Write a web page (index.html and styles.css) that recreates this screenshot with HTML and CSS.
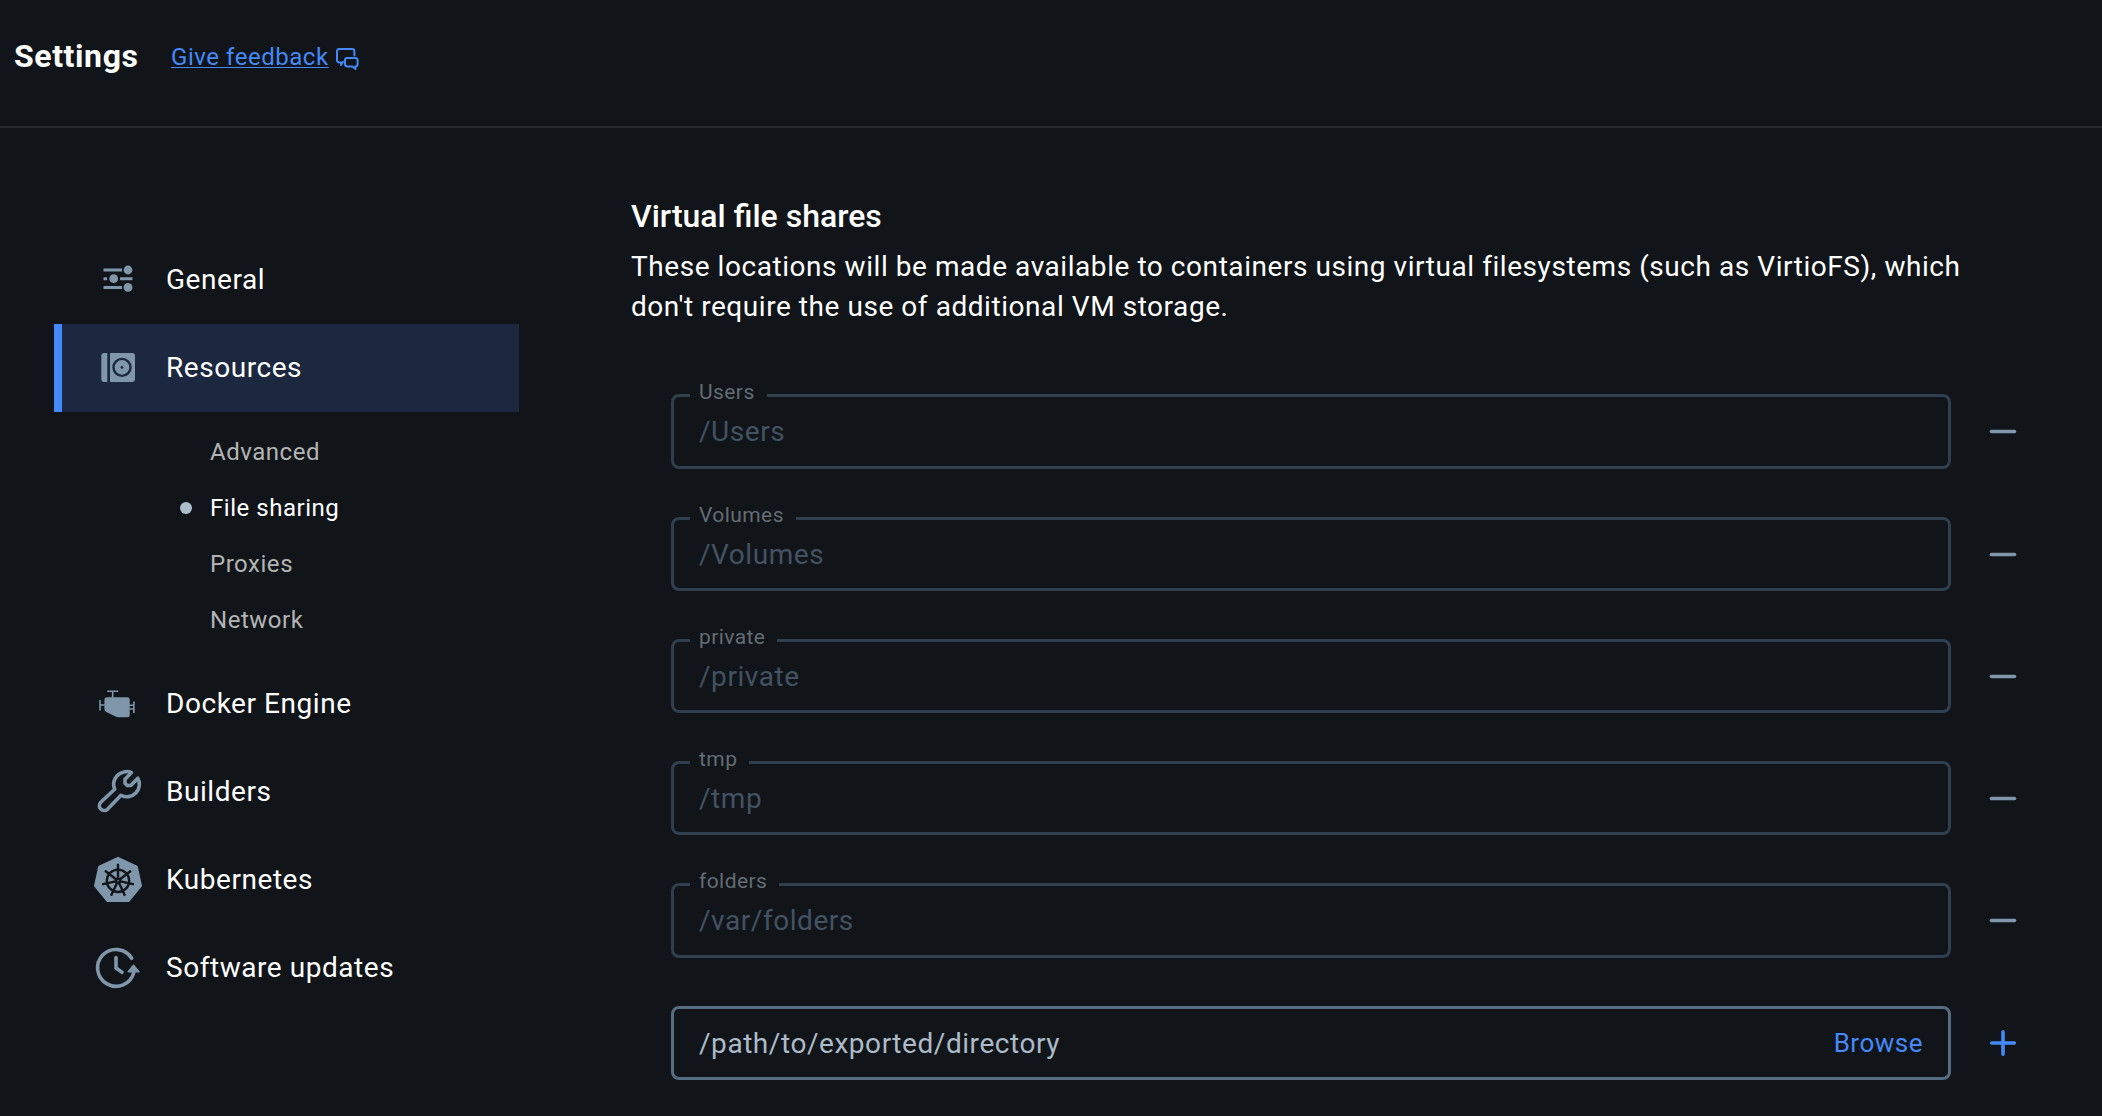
FILE: index.html
```html
<!DOCTYPE html>
<html lang="en">
<head>
<meta charset="utf-8">
<title>Settings</title>
<link rel="stylesheet" href="styles.css">
</head>
<body>
<header class="topbar">
  <h1 class="title">Settings</h1>
  <a class="feedback" href="#"><span class="feedback-text">Give feedback</span>
    <svg class="feedback-icon" viewBox="0 0 24 24" fill="none" stroke="currentColor" stroke-width="2" stroke-linejoin="round" stroke-linecap="round"><path d="M8 14.8 6 18v-2.6H4.400Q2 15.400 2 13V4.400Q2 2 4.400 2H17Q19.400 2 19.400 4.400V8.500"/><path d="M12.400 11H20Q22.600 11 22.600 13.400V17Q22.600 19.400 20.400 19.400V22L17.600 19.400H12.400Q10 19.400 10 17V13.400Q10 11 12.400 11Z"/></svg>
  </a>
</header>
<div class="layout">
  <nav class="sidebar">
    <a class="item raised"><svg class="icon" viewBox="0 0 48 48"><g stroke="currentColor" stroke-width="3"><path d="M9.500 14H28M9.500 22.700H13M26 22.700h12.500M9.500 31.400H28"/></g><g fill="currentColor"><circle cx="34" cy="14" r="4.400"/><circle cx="19.700" cy="22.700" r="4.400"/><circle cx="34" cy="31.400" r="4.400"/></g></svg><span>General</span></a>
    <a class="item raised active"><svg class="icon" viewBox="0 0.6 48 48"><path fill="currentColor" d="M10.300 9.500H13.300V38.500H10.300Q7.300 38.500 7.300 35.500V12.500Q7.300 9.500 10.300 9.500ZM16 9.500H38Q41 9.500 41 12.500V35.500Q41 38.500 38 38.500H16Z"/><circle class="ring" cx="28" cy="24" r="8.500"/><circle class="hub" cx="28" cy="24" r="1.400"/></svg><span>Resources</span></a>
    <div class="subnav">
      <a class="sub">Advanced</a>
      <a class="sub current">File sharing</a>
      <a class="sub">Proxies</a>
      <a class="sub">Network</a>
    </div>
    <a class="item"><svg class="icon" viewBox="2.3 0 48 48"><path fill="currentColor" d="M15 18.300H35.500Q38 18.300 38 20.800V36Q38 38.300 35.500 38.300H27Q25 38.300 23.300 37.300L14.500 33Q12.700 32 12.700 30V20.800Q12.700 18.300 15 18.300Z"/><path d="M15.500 12.300H26.500M21 12.300V19M8.300 21V31.500M8.300 26H13M42.200 22.500V34M37 26.300H42M37 30H42" fill="none" stroke="currentColor" stroke-width="1.600"/></svg><span>Docker Engine</span></a>
    <a class="item"><svg class="icon" viewBox="0 0 48 48"><path d="M37.500 5.600C35 4.300 32 4.200 29.500 5.200A12.500 12.500 0 0 0 20.700 22.300L6.800 35.300A4.700 4.700 0 0 0 13.500 42.200L27 28.300A12.500 12.500 0 0 0 43.800 11.200L36.800 18.500H33.200L31 16.300V12.300Z" fill="none" stroke="currentColor" stroke-width="3.600" stroke-linejoin="round"/></svg><span>Builders</span></a>
    <a class="item"><svg class="icon" viewBox="0 -1.3 48 48"><path fill="currentColor" stroke="currentColor" stroke-width="2" stroke-linejoin="round" d="M24 1.500 42.800 10.300 47 29.500 34.500 44.800H13.500L1 29.500 5.200 10.300Z"/><g class="wheel"><circle cx="24" cy="24.500" r="11.200"/><circle cx="24" cy="24.500" r="2"/><path d="M24 22V7.500M26 23 37 14.500M26.400 25 40 28M25 26.700 31 39.500M23 26.700 17 39.500M21.600 25 8 28M22 23 11 14.500"/></g></svg><span>Kubernetes</span></a>
    <a class="item"><svg class="icon" viewBox="0 0 48 48"><path d="M37.700 15.300A18.400 18.400 0 1 0 39.800 29.500" fill="none" stroke="currentColor" stroke-width="3.600" stroke-linecap="round"/><path d="M22 14.500V25L28 29.300" fill="none" stroke="currentColor" stroke-width="3.600" stroke-linecap="round" stroke-linejoin="round"/><path fill="currentColor" stroke="currentColor" stroke-width="1.500" stroke-linejoin="round" d="M39.500 22.300 44.900 28.800H34.200Z"/></svg><span>Software updates</span></a>
  </nav>
  <main class="content">
    <h2 class="heading">Virtual file shares</h2>
    <p class="desc">These locations will be made available to containers using virtual filesystems (such as VirtioFS), which<br>don't require the use of additional VM storage.</p>
    <div class="shares">
      <div class="row"><fieldset class="field"><legend>Users</legend><span>/Users</span></fieldset><svg class="minus" viewBox="0 0 26 26"><path d="M1.400 13.500H24.600"/></svg></div>
      <div class="row"><fieldset class="field"><legend>Volumes</legend><span>/Volumes</span></fieldset><svg class="minus" viewBox="0 0 26 26"><path d="M1.400 13.500H24.600"/></svg></div>
      <div class="row"><fieldset class="field"><legend>private</legend><span>/private</span></fieldset><svg class="minus" viewBox="0 0 26 26"><path d="M1.400 13.500H24.600"/></svg></div>
      <div class="row"><fieldset class="field"><legend>tmp</legend><span>/tmp</span></fieldset><svg class="minus" viewBox="0 0 26 26"><path d="M1.400 13.500H24.600"/></svg></div>
      <div class="row"><fieldset class="field"><legend>folders</legend><span>/var/folders</span></fieldset><svg class="minus" viewBox="0 0 26 26"><path d="M1.400 13.500H24.600"/></svg></div>
      <div class="row"><div class="field new"><span class="path">/path/to/exported/directory</span><a class="browse">Browse</a></div><svg class="plus" viewBox="0 0 26 26"><path d="M13 1.700V24.300M1.700 13H24.300"/></svg></div>
    </div>
  </main>
</div>
</body>
</html>
```
FILE: styles.css
```css
* { box-sizing: border-box; }
body {
  margin: 0;
  height: 1116px;
  overflow: hidden;
  background: #111519;
  color: #fff;
  font-family: Roboto, "Liberation Sans", sans-serif;
  font-size: 28px;
}
.topbar {
  display: flex;
  height: 128px;
  padding: 36px 14px 0;
  border-bottom: 2px solid #272b2e;
}
.title { margin: 0; font-size: 32px; line-height: 40px; font-weight: 700; letter-spacing: 0.6px; }
.feedback { display: flex; margin-left: 32.500px; color: #4489f9; font-size: 24px; line-height: 42px; letter-spacing: 0.53px; text-decoration: none; }
.feedback-text { text-decoration: underline; text-decoration-thickness: 1px; text-underline-offset: 2px; text-decoration-skip-ink: none; }
.feedback-icon { width: 24px; height: 24px; margin: 11px 0 0 6px; }
.layout { display: flex; }
.sidebar { width: 519px; padding: 108px 0 0 54px; }
.item {
  display: flex;
  align-items: center;
  height: 88px;
  padding-left: 40px;
  letter-spacing: 0.55px;
}
.item.active { padding-left: 32px; border-left: 8px solid #4489f9; background: #1b283f; }
.raised span { padding-bottom: 2px; }
.icon { width: 48px; height: 48px; margin-right: 24px; color: #7f96ab; overflow: visible; }
.ring { fill: none; stroke: #1b283f; stroke-width: 2.4; }
.hub { fill: #1b283f; }
.wheel { fill: none; stroke: #111519; stroke-width: 2.4; }
.subnav { padding: 12px 0 11px 156px; }
.sub { display: flex; align-items: center; height: 56px; font-size: 24px; letter-spacing: 0.53px; color: #b3b4b5; }
.current { color: #fff; }
.current::before { content: ""; width: 12px; height: 12px; margin: 0 18px 0 -30px; border-radius: 50%; background: #adbecb; }
.content { flex: 1; padding: 68px 0 0 112px; }
.heading { margin: 0; font-size: 32px; line-height: 40px; font-weight: 500; }
.desc { margin: 11px 0 0; line-height: 40px; letter-spacing: 0.555px; white-space: nowrap; }
.shares { display: flex; flex-direction: column; gap: 48.25px; margin: 67.3px 0 0 40px; }
.row { display: flex; align-items: center; height: 74px; }
.field {
  display: flex;
  align-items: center;
  width: 1280px;
  height: 74px;
  margin: 0;
  padding: 0 25px;
  border: 3px solid #303f4d;
  border-radius: 8px;
  color: #435261;
  letter-spacing: 0.55px;
}
fieldset.field { display: block; height: 86.4px; margin: -12px 0 -0.4px; padding: 0 25px 0 16px; }
fieldset.field span { display: block; margin-left: 9px; line-height: 46px; }
legend { height: 27px; padding: 0 12px 0 9px; font-size: 21px; line-height: 20px; letter-spacing: 0.42px; color: #646c74; }
.new { justify-content: space-between; border-color: #556d82; color: #adbac7; }
.path { padding-top: 1px; }
.browse { color: #4489f9; font-size: 26px; letter-spacing: 0.5px; }
.minus, .plus { width: 26px; height: 26px; margin-left: 39px; fill: none; stroke: #4489f9; stroke-width: 3.6; stroke-linecap: round; overflow: visible; }
.minus { stroke: #7f96ab; stroke-width: 3.4; }
```
